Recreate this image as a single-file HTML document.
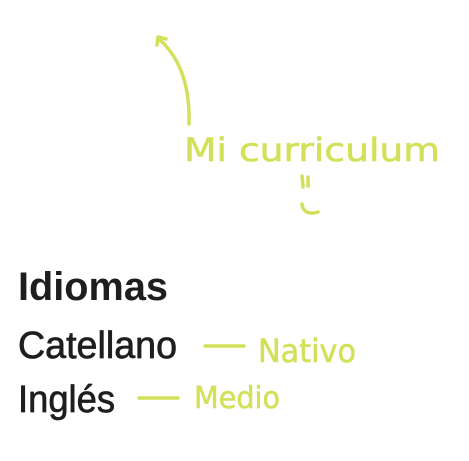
<!DOCTYPE html>
<html><head><meta charset="utf-8"><style>
html,body{margin:0;padding:0;background:#fff;width:469px;height:461px;overflow:hidden}
</style></head><body>
<svg width="469" height="461" viewBox="0 0 469 461" xmlns="http://www.w3.org/2000/svg">
<g fill="none" stroke="#d3e05a" stroke-width="3.5" stroke-linecap="round" stroke-linejoin="round">
<path d="M189 124 C190 90 182 60 160 40"/>
<path d="M157 45 L158 37 L166 39"/>
<path d="M205 346 L244 346"/>
<path d="M139 398 L178 398"/>
<path d="M302 176 L303 187 M308 177 L308 186"/>
<path d="M302 204 C303 214 312 214 318 212"/>
</g>
<g fill="#d3e05a" font-family="'DejaVu Sans',sans-serif" stroke="#d3e05a" stroke-width="0.6">
<text x="184" y="161" font-size="32" textLength="256" lengthAdjust="spacingAndGlyphs">Mi curriculum</text>
<text x="258" y="362" font-size="32" textLength="98" lengthAdjust="spacingAndGlyphs">Nativo</text>
<text x="194" y="408" font-size="30" textLength="86" lengthAdjust="spacingAndGlyphs">Medio</text>
</g>
<g fill="#1e1e1e" font-family="'Liberation Sans',sans-serif">
<text x="18" y="300" font-size="40" font-weight="bold" textLength="150" lengthAdjust="spacingAndGlyphs">Idiomas</text>
<text x="18" y="358" font-size="38" stroke="#1e1e1e" stroke-width="0.7" textLength="159" lengthAdjust="spacingAndGlyphs">Catellano</text>
<text x="18" y="412" font-size="38" stroke="#1e1e1e" stroke-width="0.7" textLength="97" lengthAdjust="spacingAndGlyphs">Inglés</text>
</g>
</svg>
</body></html>
